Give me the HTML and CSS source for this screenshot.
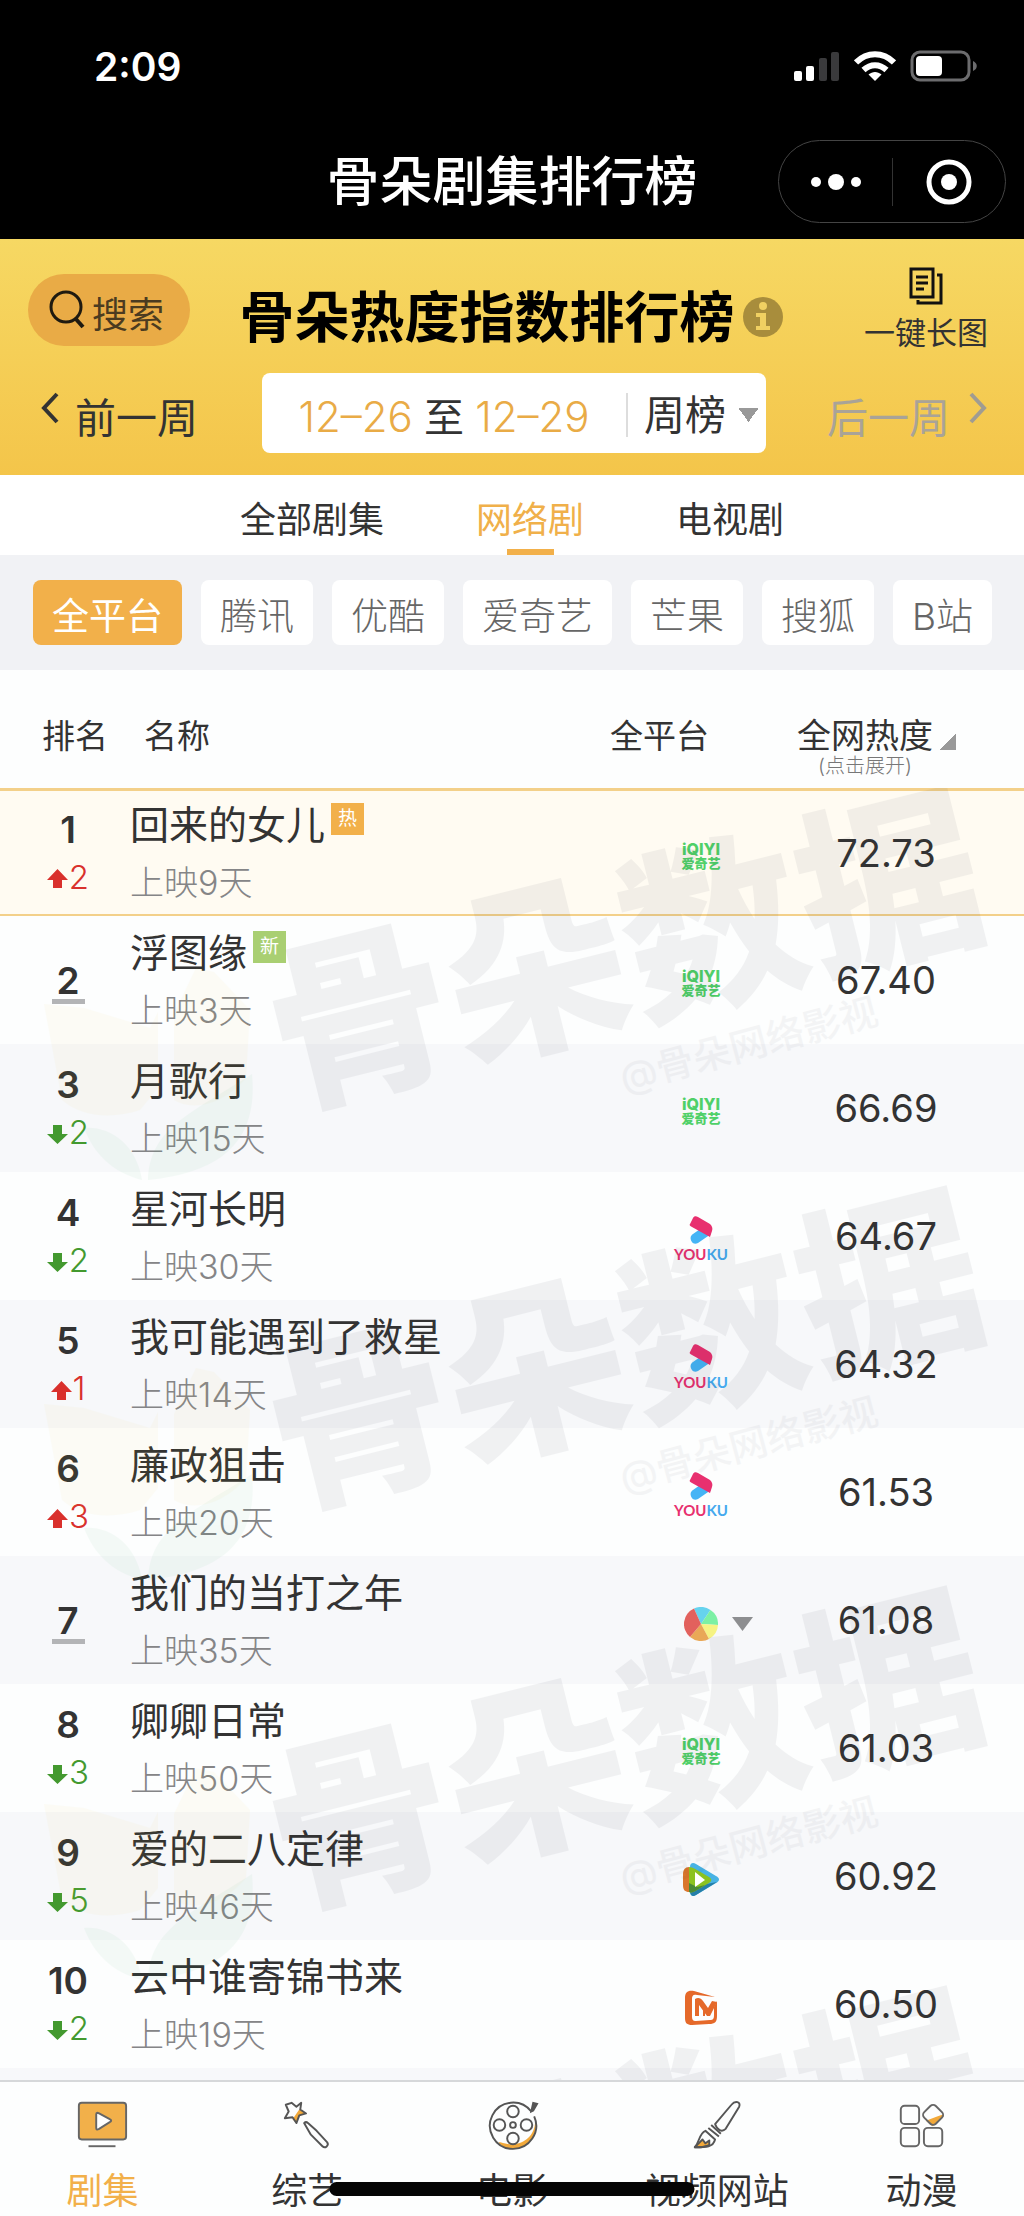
FILE: index.html
```html
<!DOCTYPE html>
<html lang="zh-CN">
<head>
  <meta charset="UTF-8" />
  <meta name="viewport" content="width=device-width, initial-scale=1.0"/>
  <title>骨朵剧集排行榜</title>
  <link rel="stylesheet" href="styles.css">
</head>
<body>
  <!-- shared shapes -->
  <svg class="sprite" aria-hidden="true">
    <symbol id="up" viewBox="0 0 21 19">
      <path d="M10.500 0 21 11H15V19H6V11H0Z" fill="#d9302c"/>
    </symbol>
    <symbol id="down" viewBox="0 0 21 19">
      <path d="M10.500 19 21 9H15V0H6V9H0Z" fill="#43992f"/>
    </symbol>
    <symbol id="youku" viewBox="0 0 24 30">
      <path d="M3 27c-2-3-2-6 1-8l10-7 8 7-13 9c-2 1-5 1-6-1Z" fill="#45b4f5"/>
      <path d="M1 9 4 3c1-2 3-2 5-1l12 7c2 2 3 4 2 7l-2 6L3 12C1 11 0 10 1 9Z" fill="#e8306f"/>
    </symbol>
  </svg>

  <header class="phone-bar">
    <div class="status">
      <span class="time">2:09</span>
      <div class="status-icons">
        <svg width="46" height="32" viewBox="0 0 46 32">
          <rect x="0" y="21" width="8" height="10" rx="2" fill="#fff"/>
          <rect x="12" y="16" width="8" height="15" rx="2" fill="#fff"/>
          <rect x="25" y="8" width="8" height="23" rx="2" fill="#3a3a3c"/>
          <rect x="37" y="2" width="8" height="29" rx="2" fill="#3a3a3c"/>
        </svg>
        <svg width="42" height="32" viewBox="0 0 42 32">
          <g fill="none" stroke="#fff" stroke-width="6">
            <path d="M2 12.500C13 1.500 29 1.500 40 12.500"/>
            <path d="M9.500 20c7-6.500 16-6.500 23 0"/>
          </g>
          <path d="M21 31 14.500 24.500c4-3.500 9-3.500 13 0Z" fill="#fff"/>
        </svg>
        <svg width="68" height="32" viewBox="0 0 68 32">
          <rect x="2" y="2" width="57" height="28" rx="8" fill="none" stroke="#6c6c6e" stroke-width="3"/>
          <rect x="6" y="6" width="26" height="20" rx="4" fill="#fff"/>
          <path d="M63 11c5 2 5 8 0 10Z" fill="#6c6c6e"/>
        </svg>
      </div>
    </div>
    <div class="app-bar">
      <h1>骨朵剧集排行榜</h1>
      <div class="capsule">
        <button type="button" aria-label="更多">
          <svg width="50" height="20" viewBox="0 0 50 20" fill="#fff">
            <circle cx="5" cy="10" r="5"/><circle cx="25" cy="10" r="8"/><circle cx="45" cy="10" r="5"/>
          </svg>
        </button>
        <button type="button" aria-label="关闭">
          <svg width="46" height="46" viewBox="0 0 46 46">
            <circle cx="23" cy="23" r="20" fill="none" stroke="#fff" stroke-width="5"/>
            <circle cx="23" cy="23" r="8" fill="#fff"/>
          </svg>
        </button>
      </div>
    </div>
  </header>

  <section class="hero">
    <div class="hero-top">
      <button type="button" class="search">
        <svg width="38" height="40" viewBox="0 0 38 40" fill="none" stroke="#1f1a10" stroke-width="3">
          <circle cx="18" cy="18" r="15"/><path d="M27 29 35 38" stroke-width="4"/>
        </svg>
        搜索
      </button>
      <div class="title">
        <h2>骨朵热度指数排行榜</h2>
        <button type="button" aria-label="说明">
          <svg width="40" height="40" viewBox="0 0 40 40">
            <circle cx="20" cy="20" r="20" fill="#a88d3c"/>
            <circle cx="20" cy="9" r="4" fill="#f0d062"/>
            <path d="M13 16H23V29H27V33H13V29H17V20H13Z" fill="#f0d062"/>
          </svg>
        </button>
      </div>
      <button type="button" class="long-image">
        <svg width="34" height="38" viewBox="0 0 34 38" fill="none" stroke="#111" stroke-width="3">
          <path d="M2 2H24V30H2Z"/><path d="M7 10H19M7 16H19M7 22H15"/><path d="M28 8H32V36H9V33"/>
        </svg>
        一键长图
      </button>
    </div>
    <div class="hero-dates">
      <button type="button" class="week">
        <svg width="20" height="32" viewBox="0 0 20 32" fill="none" stroke="#333" stroke-width="4"><path d="M17 2 4 16 17 30"/></svg>
        前一周
      </button>
      <div class="range">
        <span class="days"><time>12–26</time> 至 <time>12–29</time></span>
        <select aria-label="榜单周期">
          <option>周榜</option>
          <option>日榜</option>
          <option>月榜</option>
        </select>
      </div>
      <button type="button" class="week next" disabled>
        后一周
        <svg width="20" height="32" viewBox="0 0 20 32" fill="none" stroke="#a09c92" stroke-width="4"><path d="M3 2 16 16 3 30"/></svg>
      </button>
    </div>
  </section>

  <nav class="tabs">
    <a href="#all">全部剧集</a>
    <a href="#web" class="active">网络剧</a>
    <a href="#tv">电视剧</a>
  </nav>

  <div class="filters">
    <button type="button" class="active">全平台</button>
    <button type="button">腾讯</button>
    <button type="button">优酷</button>
    <button type="button">爱奇艺</button>
    <button type="button">芒果</button>
    <button type="button">搜狐</button>
    <button type="button">B站</button>
  </div>

  <main class="board">
    <table>
      <thead>
        <tr>
          <th class="col-rank">排名</th>
          <th class="col-name">名称</th>
          <th class="col-platform">全平台</th>
          <th class="col-heat">
            <span class="sort">全网热度</span>
            <small>(点击展开)</small>
          </th>
        </tr>
      </thead>
      <tbody>
        <tr class="top">
          <td><div class="rank"><b>1</b><span class="change up"><svg><use href="#up"/></svg>2</span></div></td>
          <td><div class="name">回来的女儿<i class="badge hot">热</i></div><div class="days-on">上映9天</div></td>
          <td><div class="iqiyi">iQIYI<span>爱奇艺</span></div></td>
          <td class="heat">72.73</td>
        </tr>
        <tr>
          <td><div class="rank same"><b>2</b></div></td>
          <td><div class="name">浮图缘<i class="badge new">新</i></div><div class="days-on">上映3天</div></td>
          <td><div class="iqiyi">iQIYI<span>爱奇艺</span></div></td>
          <td class="heat">67.40</td>
        </tr>
        <tr>
          <td><div class="rank"><b>3</b><span class="change down"><svg><use href="#down"/></svg>2</span></div></td>
          <td><div class="name">月歌行</div><div class="days-on">上映15天</div></td>
          <td><div class="iqiyi">iQIYI<span>爱奇艺</span></div></td>
          <td class="heat">66.69</td>
        </tr>
        <tr>
          <td><div class="rank"><b>4</b><span class="change down"><svg><use href="#down"/></svg>2</span></div></td>
          <td><div class="name">星河长明</div><div class="days-on">上映30天</div></td>
          <td><div class="youku"><svg><use href="#youku"/></svg><span>YOU<em>KU</em></span></div></td>
          <td class="heat">64.67</td>
        </tr>
        <tr>
          <td><div class="rank"><b>5</b><span class="change up"><svg><use href="#up"/></svg>1</span></div></td>
          <td><div class="name">我可能遇到了救星</div><div class="days-on">上映14天</div></td>
          <td><div class="youku"><svg><use href="#youku"/></svg><span>YOU<em>KU</em></span></div></td>
          <td class="heat">64.32</td>
        </tr>
        <tr>
          <td><div class="rank"><b>6</b><span class="change up"><svg><use href="#up"/></svg>3</span></div></td>
          <td><div class="name">廉政狙击</div><div class="days-on">上映20天</div></td>
          <td><div class="youku"><svg><use href="#youku"/></svg><span>YOU<em>KU</em></span></div></td>
          <td class="heat">61.53</td>
        </tr>
        <tr>
          <td><div class="rank same"><b>7</b></div></td>
          <td><div class="name">我们的当打之年</div><div class="days-on">上映35天</div></td>
          <td>
            <div class="multi">
              <svg class="pie" width="34" height="34" viewBox="0 0 34 34">
                <path d="M17 17 10 1.500A17 17 0 0 1 26.500 3Z" fill="#66d3ee"/>
                <path d="M17 17 26.500 3A17 17 0 0 1 34 18Z" fill="#7cf0a4"/>
                <path d="M17 17 34 18A17 17 0 0 1 25 32Z" fill="#f6f383"/>
                <path d="M17 17 25 32A17 17 0 0 1 6 30Z" fill="#e9a857"/>
                <path d="M17 17 6 30A17 17 0 0 1 10 1.500Z" fill="#e2615d"/>
              </svg>
              <button type="button" aria-label="展开平台">
                <svg width="21" height="14" viewBox="0 0 21 14"><path d="M0 0H21L10.500 14Z" fill="#8d8e90"/></svg>
              </button>
            </div>
          </td>
          <td class="heat">61.08</td>
        </tr>
        <tr>
          <td><div class="rank"><b>8</b><span class="change down"><svg><use href="#down"/></svg>3</span></div></td>
          <td><div class="name">卿卿日常</div><div class="days-on">上映50天</div></td>
          <td><div class="iqiyi">iQIYI<span>爱奇艺</span></div></td>
          <td class="heat">61.03</td>
        </tr>
        <tr>
          <td><div class="rank"><b>9</b><span class="change down"><svg><use href="#down"/></svg>5</span></div></td>
          <td><div class="name">爱的二八定律</div><div class="days-on">上映46天</div></td>
          <td>
            <svg class="logo" width="36" height="34" viewBox="0 0 36 34">
              <path d="M7 4c0-4 3-5 6-3l20 12c4 2 4 5 0 7L13 32c-3 2-6 1-6-3Z" fill="#48b3e4"/>
              <path d="M8 24 34 19 13 32c-3 2-5 1-6-3Z" fill="#267fa8"/>
              <path d="M6 4C2 4 0 7 0 11V22c0 5 2 7 6 7Z" fill="#d9762c"/>
              <path d="M6 4c2 0 5 1 8 3l12 7c3 2 3 4 0 6l-12 7c-3 2-6 3-8 2Z" fill="#8cc220"/>
              <path d="M6 20 14 24 22 22 14 27c-3 2-6 3-8 2Z" fill="#4a8a35"/>
              <path d="M12 9 22 17 12 24Z" fill="#fff"/>
            </svg>
          </td>
          <td class="heat">60.92</td>
        </tr>
        <tr>
          <td><div class="rank"><b>10</b><span class="change down"><svg><use href="#down"/></svg>2</span></div></td>
          <td><div class="name">云中谁寄锦书来</div><div class="days-on">上映19天</div></td>
          <td>
            <svg class="logo" width="34" height="36" viewBox="0 0 34 36">
              <path d="M31 7 10 1C4 0 1 2 1 8V28c0 5 2 7 7 7l17-1c6 0 8-2 8-8V11L30 17V25c0 4-1 5-4 5l-14 1c-3 0-4-1-4-5V9c0-3 1-5 5-4Z" fill="#e5692a"/>
              <path d="M11 9C14 7 17 8 19 11l5 7 4-7 5 1-7 14h-3l-8-11V26H11Z" fill="#e5692a"/>
              <path d="M20 17V26" stroke="#e5692a" stroke-width="2"/>
            </svg>
          </td>
          <td class="heat">60.50</td>
        </tr>
      </tbody>
    </table>

    <!-- repeated brand watermark over the rows -->
    <svg class="watermark" viewBox="0 0 1024 1292" preserveAspectRatio="xMinYMin slice" aria-hidden="true">
      <defs>
        <g id="mark">
          <g fill="#e8c830" opacity=".04">
            <path d="M44 216 84 220 150 240 158 224V300L140 322C110 332 80 328 62 312Z"/>
            <path d="M174 226 196 180 214 184 250 222 246 290C220 320 190 322 174 312Z"/>
          </g>
          <g fill="#2fa860" opacity=".045">
            <path d="M84 340C110 338 136 356 142 392 112 384 94 366 84 340Z"/>
            <path d="M252 286C258 350 226 384 148 392 150 340 190 326 252 286Z"/>
          </g>
          <g fill="#22263a">
            <text class="mark-big" transform="translate(287 315) rotate(-14)">骨朵数据</text>
            <text class="mark-small" transform="translate(624 304) rotate(-15)">@骨朵网络影视</text>
          </g>
        </g>
      </defs>
      <use href="#mark"/>
      <use href="#mark" y="400"/>
      <use href="#mark" y="800"/>
      <use href="#mark" y="1200"/>
    </svg>
  </main>

  <footer class="tabbar">
    <a href="#drama" class="active">
      <svg viewBox="0 0 56 56" fill="none" stroke="#666" stroke-width="2">
        <rect x="4" y="5" width="49" height="38" rx="3" fill="#f2b04a"/>
        <path d="M22 17c0-2 1-2 3-1l11 6c2 1 2 2 0 3l-11 7c-2 1-3 1-3-1Z" fill="#fff"/>
        <path d="M14 50H42"/>
      </svg>
      剧集
    </a>
    <a href="#variety">
      <svg viewBox="0 0 56 56" fill="none" stroke="#555" stroke-width="2" stroke-linejoin="round">
        <path d="M20 12 27 16 20 18 17 26 13 22Z" fill="#f2a93a" stroke="none"/>
        <path d="M12 5 17 9 22 5 21 12 27 16 20 18 17 26 13 20 5 21 9 14 6 7Z"/>
        <path d="M25 26c2-2 3-1 4 0l9 8 11 12c2 3-2 7-5 4L32 38Z"/>
      </svg>
      综艺
    </a>
    <a href="#film">
      <svg viewBox="0 0 56 56" fill="none" stroke="#555" stroke-width="2">
        <path d="M51 18C56 36 40 54 16 46 10 45 22 54 30 53 48 52 57 34 51 18Z" fill="#f2a93a" stroke="none"/>
        <path d="M48 14A24 24 0 1 0 51 19"/>
        <circle cx="29" cy="14" r="6"/><circle cx="29" cy="42" r="6"/>
        <circle cx="15" cy="28" r="6"/><circle cx="43" cy="28" r="6"/>
        <circle cx="29" cy="28" r="3"/>
        <path d="M48 14 50 5 54 6 50 13Z" fill="#555"/>
      </svg>
      电影
    </a>
    <a href="#sites">
      <svg viewBox="0 0 56 56" fill="none" stroke="#555" stroke-width="2" stroke-linejoin="round">
        <path d="M5 51 13 43 16 47 20 44 20 49 12 51Z" fill="#f2a93a"/>
        <path d="M5 51C10 46 9 37 16 34l10 9c-2 8-9 8-21 8Z"/>
        <path d="M19 31 30 40M22 28 32 37"/>
        <path d="M26 27 43 7c4-5 10-3 8 2L37 32c-4 4-9 1-11-5Z"/>
      </svg>
      视频网站
    </a>
    <a href="#anime">
      <svg viewBox="0 0 56 56" fill="none" stroke="#666" stroke-width="2">
        <rect x="6" y="8" width="19" height="19" rx="4"/>
        <rect x="6" y="31" width="19" height="19" rx="4"/>
        <rect x="30" y="31" width="19" height="19" rx="4"/>
        <path d="M50 18 44 20 34 24 39 28Z" fill="#f2a93a" stroke="#f2a93a"/>
        <rect x="31" y="9" width="17" height="17" rx="4" transform="rotate(45 39.500 17.500)"/>
      </svg>
      动漫
    </a>
    <span class="home-indicator"></span>
  </footer>
</body>
</html>
```
FILE: styles.css
```css
* {
  box-sizing: border-box;
  margin: 0;
  padding: 0;
}

body {
  font-family: Inter, "Noto Sans CJK SC", sans-serif;
  background: #fdfefe;
  color: #333;
  min-height: 100vh;
  display: flex;
  flex-direction: column;
}

button,
select {
  font: inherit;
  color: inherit;
  background: none;
  border: 0;
}

a {
  color: inherit;
  text-decoration: none;
}

svg {
  display: block;
}

.sprite {
  display: none;
}

/* status bar and mini-program bar */
.phone-bar {
  background: #000;
  color: #fff;
  padding: 40px 18px 16px;
}

.status {
  display: flex;
  justify-content: space-between;
  align-items: center;
  height: 52px;
  padding: 0 28px 0 76px;
}

.time {
  font-size: 39px;
  font-weight: 600;
}

.status-icons {
  display: flex;
  gap: 14px;
}

.app-bar {
  display: grid;
  grid-template-columns: 1fr auto 1fr;
  align-items: center;
  margin-top: 48px;
}

.app-bar h1 {
  grid-column: 2;
  font-size: 53px;
  line-height: 60px;
  font-weight: 500;
}

.capsule {
  justify-self: end;
  display: flex;
  width: 228px;
  height: 83px;
  border: 1px solid #444;
  border-radius: 42px;
}

.capsule button {
  flex: 1;
  display: flex;
  align-items: center;
  justify-content: center;
}

.capsule button + button {
  background: linear-gradient(#333, #333) left center / 1px 48px no-repeat;
}

/* yellow header */
.hero {
  background: linear-gradient(#f6d863, #f4c54a);
  padding: 28px 36px 22px 28px;
}

.hero-top {
  display: grid;
  grid-template-columns: 1fr auto 1fr;
  align-items: start;
  height: 88px;
}

.search {
  justify-self: start;
  display: flex;
  align-items: center;
  gap: 6px;
  height: 72px;
  margin-top: 7px;
  padding: 4px 26px 0 20px;
  border-radius: 36px;
  background: #e9ab46;
  color: #4b3b20;
  font-size: 36px;
}

.search svg {
  margin-top: -6px;
}

.title {
  display: flex;
  align-items: center;
  gap: 8px;
  padding: 18px 0 0 6px;
}

.title h2 {
  font-size: 55px;
  line-height: 64px;
  font-weight: 700;
  color: #000;
}

.long-image {
  justify-self: end;
  display: flex;
  flex-direction: column;
  align-items: center;
  gap: 6px;
  font-size: 31px;
  line-height: 44px;
}

.hero-dates {
  display: grid;
  grid-template-columns: 1fr 504px 1fr;
  align-items: center;
  margin-top: 18px;
  padding-left: 12px;
}

.week {
  justify-self: start;
  display: flex;
  gap: 15px;
  padding-top: 10px;
  font-size: 41px;
  line-height: 52px;
}

.week.next {
  justify-self: end;
  gap: 18px;
  color: #a9a398;
}

.range {
  display: flex;
  align-items: center;
  height: 80px;
  padding-top: 4px;
  border-radius: 8px;
  background: #fff;
  font-size: 40px;
}

.days {
  flex: 1;
  text-align: center;
}

.days time {
  color: #e9ab46;
  font-size: 42px;
  font-weight: 300;
}

.range select {
  appearance: none;
  height: 44px;
  width: 140px;
  padding-left: 16px;
  border-left: 2px solid #ddd;
  font-size: 41px;
  line-height: 44px;
  background: conic-gradient(from -36deg at 50% 100%, #999 72deg, transparent 0) right 7px center / 21px 14px no-repeat;
}

/* category tabs */
.tabs {
  display: flex;
  justify-content: center;
  gap: 92px;
  background: #fff;
}

.tabs a {
  position: relative;
  height: 80px;
  padding-top: 5px;
  font-size: 36px;
  line-height: 80px;
}

.tabs .active {
  color: #f0b04a;
}

.tabs .active::after {
  content: "";
  position: absolute;
  left: 50%;
  bottom: 0;
  width: 47px;
  height: 6px;
  margin-left: -23px;
  background: #f2b04a;
}

/* platform filters */
.filters {
  display: flex;
  gap: 19px;
  padding: 25px 33px;
  background: #f1f2f5;
}

.filters button {
  height: 65px;
  padding: 8px 19px 0;
  border-radius: 8px;
  background: #fff;
  color: #666;
  font-size: 37px;
  line-height: 57px;
  font-weight: 300;
  white-space: nowrap;
}

.filters .active {
  background: #f2b04a;
  color: #fff;
  font-weight: 400;
}

/* ranking table */
.board {
  flex: 1;
  position: relative;
  overflow: hidden;
  background: #f7f8fa;
}

table {
  width: 100%;
  table-layout: fixed;
  border-spacing: 0;
}

thead {
  background: #fdfefe;
}

th {
  height: 118px;
  padding-top: 46px;
  vertical-align: top;
  font-size: 33px;
  line-height: 40px;
  font-weight: 400;
}

.col-rank {
  width: 130px;
  padding-left: 20px;
}

.col-name {
  text-align: left;
  padding-left: 14px;
}

.col-platform {
  width: 182px;
  padding-right: 90px;
  white-space: nowrap;
}

.col-heat {
  width: 232px;
  padding-right: 86px;
  font-size: 34px;
}

th small {
  display: block;
  font-size: 20px;
  line-height: 20px;
  font-weight: 300;
  color: #777;
}

.sort {
  position: relative;
}

.sort::after {
  content: "";
  position: absolute;
  left: 100%;
  bottom: 6px;
  margin-left: 6px;
  width: 17px;
  height: 16px;
  background: linear-gradient(to bottom right, transparent 50%, #999 50%);
}

td {
  height: 128px;
  vertical-align: middle;
}

tbody tr {
  background: #fdfefe;
}

tbody tr:nth-child(odd) {
  background: #f7f8fa;
}

tbody tr.top {
  background: #fffbf2;
}

.top td {
  border-top: 3px solid #f3d08a;
  border-bottom: 2px solid #f3d08a;
}

.rank {
  display: flex;
  flex-direction: column;
  align-items: center;
  gap: 6px;
  padding: 6px 0 0 6px;
}

.rank b {
  font-size: 37px;
  line-height: 36px;
  font-weight: 600;
}

.rank.same b {
  min-width: 33px;
  text-align: center;
  border-bottom: 5px solid #b3b4b6;
}

.change {
  display: flex;
  align-items: center;
  gap: 1px;
  font-size: 33px;
  line-height: 46px;
  font-weight: 300;
}

.change svg {
  width: 21px;
  height: 19px;
  margin-top: 4px;
}

.up {
  color: #d9302c;
}

.down {
  color: #43992f;
}

.name {
  display: flex;
  font-size: 39px;
  line-height: 54px;
  white-space: nowrap;
}

.badge {
  width: 33px;
  height: 32px;
  margin: 5px 0 0 6px;
  color: #fff;
  font-size: 19px;
  line-height: 32px;
  font-style: normal;
  text-align: center;
}

.hot {
  background: #f2b04a;
}

.new {
  background: #a9cf72;
}

.days-on {
  margin-top: 7px;
  font-size: 34px;
  line-height: 48px;
  font-weight: 300;
  color: #858587;
}

.heat {
  padding-right: 44px;
  font-size: 38px;
  text-align: center;
}

.iqiyi {
  padding-top: 6px;
  color: #4fd068;
  font-size: 16px;
  line-height: 14px;
  font-weight: 800;
  text-align: center;
}

.iqiyi span {
  display: block;
  font-size: 13px;
  line-height: 14px;
}

.youku {
  display: flex;
  flex-direction: column;
  align-items: center;
  padding-top: 6px;
  color: #e8306f;
  font-family: Lato, sans-serif;
  font-size: 15px;
  line-height: 18px;
  font-weight: 700;
}

.youku svg {
  width: 24px;
  height: 30px;
}

.youku em {
  color: #45a9ee;
  font-style: normal;
}

.multi {
  display: grid;
  grid-template-columns: 1fr auto 1fr;
  align-items: center;
  gap: 14px;
  padding-top: 8px;
}

.pie {
  grid-column: 2;
}

.multi button {
  justify-self: start;
}

.logo {
  margin: 8px auto 0;
}

.watermark {
  position: absolute;
  left: 0;
  top: 118px;
  width: 100%;
  pointer-events: none;
}

.mark-big {
  font-size: 182px;
  font-weight: 900;
  opacity: .055;
}

.mark-small {
  font-size: 38px;
  font-weight: 500;
  opacity: .04;
}

/* bottom tab bar */
.tabbar {
  position: relative;
  display: flex;
  height: 136px;
  padding-top: 16px;
  border-top: 2px solid #d6d8da;
  background: #fdfefe;
}

.tabbar a {
  flex: 1;
  display: flex;
  flex-direction: column;
  align-items: center;
  gap: 14px;
  font-size: 36px;
  line-height: 50px;
}

.tabbar svg {
  width: 56px;
  height: 56px;
}

.tabbar .active {
  color: #f2b04a;
}

.home-indicator {
  position: absolute;
  left: 50%;
  bottom: 20px;
  width: 365px;
  height: 14px;
  transform: translateX(-50%);
  border-radius: 7px;
  background: #050505;
}
```
